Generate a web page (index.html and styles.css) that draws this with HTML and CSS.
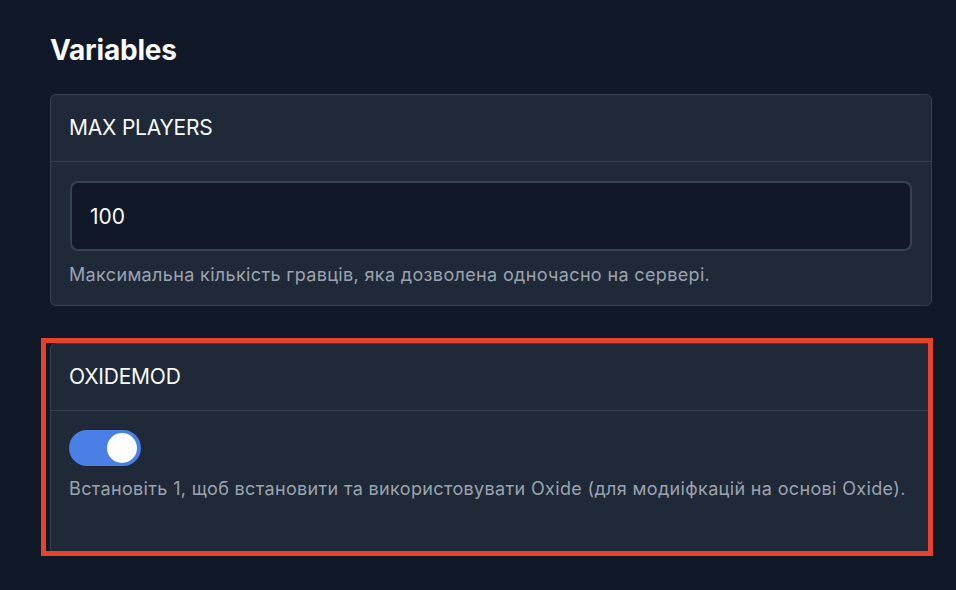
FILE: index.html
```html
<!DOCTYPE html>
<html lang="uk">
<head>
  <meta charset="UTF-8" />
  <meta name="viewport" content="width=device-width, initial-scale=1" />
  <title>Variables</title>
  <link rel="stylesheet" href="styles.css">
</head>
<body>

  <main class="variables">
    <h1 class="page-title">Variables</h1>

    <!-- MAX PLAYERS -->
    <section class="var-card">
      <div class="var-card-header">MAX PLAYERS</div>
      <div class="var-card-body">
        <input class="var-input" type="text" value="100" />
        <p class="var-help">Максимальна кількість гравців, яка дозволена одночасно на сервері.</p>
      </div>
    </section>

    <!-- OXIDEMOD -->
    <section class="var-card var-card-toggle">
      <div class="var-card-header">OXIDEMOD</div>
      <div class="var-card-body">
        <label class="switch">
          <input type="checkbox" checked />
          <span class="switch-track"></span>
        </label>
        <p class="var-help">Встановіть 1, щоб встановити та використовувати Oxide (для модиіфкацій на основі Oxide).</p>
      </div>
    </section>
  </main>

  <div class="highlight"></div>

</body>
</html>
```

FILE: styles.css
```css
* {
  margin: 0;
  padding: 0;
  box-sizing: border-box;
}
body {
  font-family: 'Inter', 'Noto Sans', sans-serif;
  background-color: #111827;
  color: #f3f4f6;
  min-height: 100vh;
  -webkit-font-smoothing: antialiased;
}
.variables {
  padding: 30px 24px 0 50px;
}
.page-title {
  font-size: 28px;
  font-weight: 700;
  line-height: 40px;
  color: #f9fafb;
  margin-bottom: 24px;
  letter-spacing: -0.2px;
}
.var-card {
  background: #1f2937;
  border: 1px solid #374151;
  border-radius: 6px;
}
.var-card + .var-card {
  margin-top: 37px;
}
.var-card-header {
  padding: 21px 18px;
  font-size: 21px;
  line-height: 24px;
  letter-spacing: -0.2px;
  border-bottom: 1px solid #374151;
  color: #f9fafb;
}
.var-card-body {
  padding: 19px 19px 18px;
}
.var-input {
  display: block;
  width: 100%;
  height: 70px;
  padding: 0 18px;
  border: 2px solid #374151;
  border-radius: 8px;
  background: #111827;
  color: #f9fafb;
  font-family: inherit;
  font-size: 21px;
  outline: none;
}
.var-help {
  margin-top: 12px;
  margin-left: -1px;
  font-size: 18px;
  line-height: 24px;
  color: #9ca3af;
  letter-spacing: 0.35px;
}
.var-card-toggle .var-card-body {
  padding-bottom: 52px;
}
.var-card-toggle .var-help {
  margin-top: 11px;
}

/* Toggle switch */
.switch {
  display: block;
  position: relative;
  width: 72px;
  height: 36px;
  margin-left: -1px;
}
.switch input {
  display: none;
}
.switch-track {
  position: absolute;
  inset: 0;
  border-radius: 18px;
  background: #4a7fe6;
}
.switch-track::after {
  content: "";
  position: absolute;
  top: 3px;
  right: 4px;
  width: 30px;
  height: 30px;
  border-radius: 50%;
  background: #ffffff;
}

/* annotation frame around the second card */
.highlight {
  position: absolute;
  left: 41px;
  top: 338px;
  width: 892px;
  height: 218px;
  border: 5px solid #e5432d;
  pointer-events: none;
}
```
